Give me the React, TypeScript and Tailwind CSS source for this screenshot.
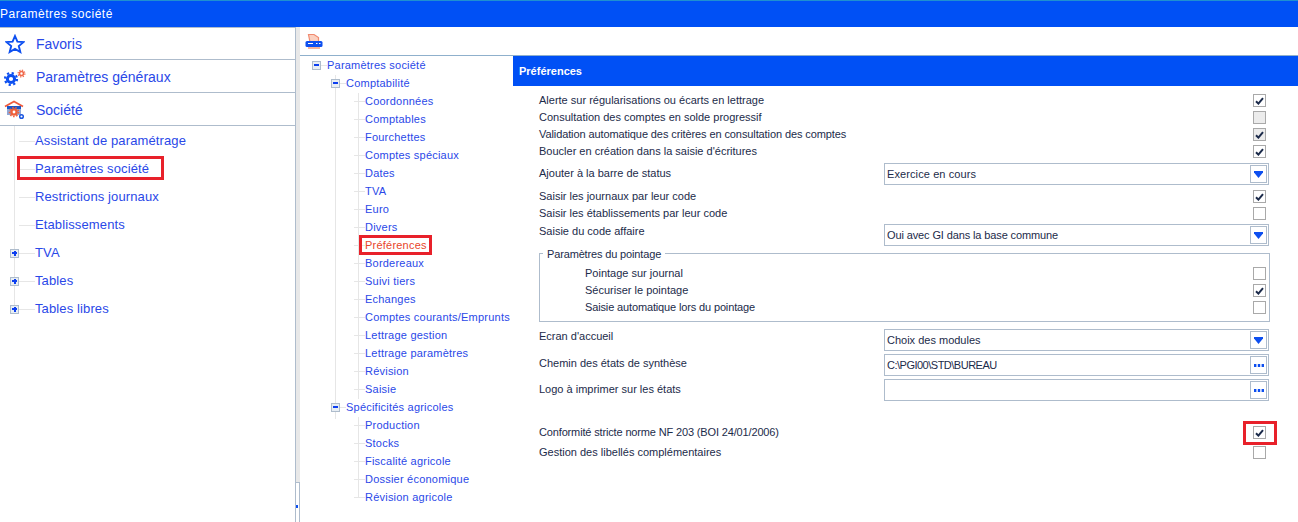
import type { ReactNode } from "react";

const font = "font-['Liberation_Sans',Arial,sans-serif]";

function Check({ on, gray }: { on?: boolean; gray?: boolean }) {
	return (
		<span
			className={`flex h-[13px] w-[13px] items-center justify-center border border-[#a9a9a9] ${gray ? "bg-[#ececec]" : "bg-white"}`}
		>
			{on && (
				<svg width="9" height="8" viewBox="0 0 9 8">
					<path d="M1 4.2 L3.4 6.6 L8 1.2" fill="none" stroke="#1b2a4a" strokeWidth="2" />
				</svg>
			)}
		</span>
	);
}

function Row({
	label,
	on,
	gray,
	indent,
	track = "",
}: {
	label: string;
	on?: boolean;
	gray?: boolean;
	indent?: boolean;
	track?: string;
}) {
	return (
		<div className="flex h-[17px] items-center justify-between pr-[32px]">
			<span className={`${indent ? "pl-[45px]" : ""} ${track}`}>{label}</span>
			<Check on={on} gray={gray} />
		</div>
	);
}

function Field({
	label,
	value,
	kind,
	shift = "-translate-y-px",
	track = "",
}: {
	label: string;
	value?: string;
	kind: "select" | "dots";
	shift?: string;
	track?: string;
}) {
	return (
		<div className="flex h-[22px] items-center pr-[29px]">
			<span className={`w-[345px] ${shift}`}>{label}</span>
			<div className="flex h-[22px] flex-1 items-center justify-between border border-[#aebccc] bg-white pl-[2px] pr-px">
				<span className={`text-[#1c2b4a] ${track}`}>{value}</span>
				<span className="flex h-[18px] w-[17px] items-center justify-center border border-[#aebccc]">
					{kind === "select" ? (
						<svg width="9" height="7" viewBox="0 0 9 7">
							<path d="M0 0 H9 V1.5 L4.5 7 L0 1.5 Z" fill="#0d4ff0" />
						</svg>
					) : (
						<svg width="10" height="3" viewBox="0 0 10 3">
							<rect x="0" y="0" width="2.4" height="3" fill="#0d4ff0" />
							<rect x="3.8" y="0" width="2.4" height="3" fill="#0d4ff0" />
							<rect x="7.6" y="0" width="2.4" height="3" fill="#0d4ff0" />
						</svg>
					)}
				</span>
			</div>
		</div>
	);
}

function Toggle({ plus }: { plus?: boolean }) {
	return (
		<span className="relative z-10 flex h-[9px] w-[9px] shrink-0 items-center justify-center border border-[#aebccc] bg-[#e8eef4]">
			<span className="absolute h-[2px] w-[5px] bg-[#0d3ff0]" />
			{plus && <span className="absolute h-[5px] w-[2px] bg-[#0d3ff0]" />}
		</span>
	);
}

function MainItem({ label, icon, first }: { label: string; icon: ReactNode; first?: boolean }) {
	return (
		<div className={`flex items-center border-b border-[#aebccc] ${first ? "h-[32px] pt-px" : "h-[33px] pt-[2px]"}`}>
			<span className="flex w-[36px] shrink-0 justify-center pr-[6px]">{icon}</span>
			<span className="text-[14px] text-[#2a48e8]">{label}</span>
		</div>
	);
}

function SideLeaf({ label, toggle, boxed }: { label: string; toggle?: boolean; boxed?: boolean }) {
	return (
		<div className="relative flex h-[28px] items-center pl-[10px] text-[13px] tracking-[0.12px] text-[#2a48e8]">
			<span className="flex w-[9px] justify-center">{toggle && <Toggle plus />}</span>
			<span className="h-px w-[16px] bg-[#e6e6e6]" />
			<span>{label}</span>
			{boxed && (
				<span className="absolute left-[17px] top-[1px] h-[24px] w-[147px] border-[3px] border-[#e8212a]" />
			)}
		</div>
	);
}

function TreeLeaf({ label, active }: { label: string; active?: boolean }) {
	return (
		<div className="relative flex h-[18px] items-center pl-[54px]">
			<span className="h-px w-[11px] bg-[#e6e6e6]" />
			<span className={active ? "text-[#e8452a]" : "text-[#2a48e8]"}>{label}</span>
			{active && (
				<span className="absolute left-[59px] top-[-1px] h-[20px] w-[73px] border-[3px] border-[#e8212a]" />
			)}
		</div>
	);
}

function TreeBranch({ label, indent }: { label: string; indent: "root" | "sub" }) {
	return (
		<div className={`flex h-[18px] items-center ${indent === "root" ? "pl-[12px]" : "pl-[31px]"}`}>
			<Toggle />
			<span className="h-px w-[6px] bg-[#e6e6e6]" />
			<span className="text-[#2a48e8]">{label}</span>
		</div>
	);
}

const compta = [
	"Coordonnées",
	"Comptables",
	"Fourchettes",
	"Comptes spéciaux",
	"Dates",
	"TVA",
	"Euro",
	"Divers",
	"Préférences",
	"Bordereaux",
	"Suivi tiers",
	"Echanges",
	"Comptes courants/Emprunts",
	"Lettrage gestion",
	"Lettrage paramètres",
	"Révision",
	"Saisie",
];
const agri = ["Production", "Stocks", "Fiscalité agricole", "Dossier économique", "Révision agricole"];

export default function App() {
	return (
		<div className={`${font} flex h-[522px] w-[1298px] flex-col overflow-hidden bg-white`}>
			<div className="flex h-[27px] shrink-0 items-center border-t border-[#1f8fd0] bg-[#0050f5] text-[12px] tracking-[0.53px] text-white">
				Paramètres société
			</div>
			<div className="flex flex-1">
				{/* colonne de gauche */}
				<div className="relative flex w-[296px] shrink-0 flex-col border-r border-t border-[#aebccc]">
					<MainItem
						first
						label="Favoris"
						icon={
							<svg width="20" height="20" viewBox="0 0 20 20">
								<path
									d="M10 2 L12.4 7.6 L18.5 8.1 L13.8 12.1 L15.3 18 L10 14.9 L4.7 18 L6.2 12.1 L1.5 8.1 L7.6 7.6 Z"
									fill="none"
									stroke="#0d4ff0"
									strokeWidth="1.9"
								/>
							</svg>
						}
					/>
					<MainItem
						label="Paramètres généraux"
						icon={
							<svg width="22" height="18" viewBox="0 0 22 18">
								<circle cx="7" cy="11" r="3.6" fill="#fff" stroke="#0d4ff0" strokeWidth="3" />
								<circle cx="7" cy="11" r="6" fill="none" stroke="#0d4ff0" strokeWidth="2.2" strokeDasharray="2.2 2.5" />
								<circle cx="17.5" cy="5.5" r="2" fill="#fff" stroke="#f0684a" strokeWidth="1.6" />
								<circle cx="17.5" cy="5.5" r="3.4" fill="none" stroke="#f0684a" strokeWidth="1.2" strokeDasharray="1.3 1.37" />
							</svg>
						}
					/>
					<MainItem
						label="Société"
						icon={
							<svg width="22" height="20" viewBox="0 0 22 20">
								<path d="M1 6.5 L10 1.5 L19 6.5" fill="none" stroke="#ee5a3c" strokeWidth="1.8" />
								<rect x="3" y="6" width="14" height="3" fill="#1a55c8" />
								<rect x="3" y="9" width="14" height="6" fill="#8fa8d8" />
								<circle cx="10" cy="12" r="2.6" fill="#fff" stroke="#f0603a" strokeWidth="2.4" />
								<circle cx="10" cy="12" r="4.6" fill="none" stroke="#f0603a" strokeWidth="1.4" strokeDasharray="1.6 1.6" />
								<circle cx="17.5" cy="16.5" r="1.8" fill="#fff" stroke="#1a55e0" strokeWidth="1.5" />
							</svg>
						}
					/>
					<div className="relative pt-px">
						<span className="absolute bottom-[14px] left-[14px] top-0 w-px bg-[#e6e6e6]" />
						<SideLeaf label="Assistant de paramétrage" />
						<SideLeaf label="Paramètres société" boxed />
						<SideLeaf label="Restrictions journaux" />
						<SideLeaf label="Etablissements" />
						<SideLeaf label="TVA" toggle />
						<SideLeaf label="Tables" toggle />
						<SideLeaf label="Tables libres" toggle />
					</div>
				</div>
				{/* poignée */}
				<div className="flex w-[4px] shrink-0 flex-col justify-end bg-[#e8e8e8]">
					<div className="flex h-[40px] w-[4px] items-center border-r border-t border-[#aebccc] bg-white pt-[8px]">
						<span className="h-[3px] w-[2px] bg-[#0d4ff0]" />
					</div>
				</div>
				<div className="flex min-w-0 flex-1 flex-col">
					<div className="flex h-[29px] shrink-0 items-center border-b border-[#8fb0cc] pl-[5px]">
						<svg width="18" height="17" viewBox="0 0 18 17">
							<path d="M3.5 1.5 H9 L13.5 4.5 V9 H5 Z" fill="#fbd0bf" stroke="#f08a70" strokeWidth="1.2" />
							<rect x="0.5" y="8" width="17" height="6" rx="1.5" fill="#0d4ff0" />
							<rect x="3" y="10" width="5" height="1" fill="#fff" />
							<rect x="11" y="10" width="1.5" height="1" fill="#fff" />
							<rect x="14" y="10" width="1.5" height="1" fill="#fff" />
							<rect x="3" y="14" width="12" height="2" fill="#f7b49c" />
						</svg>
					</div>
					<div className="flex flex-1 text-[11px]">
						{/* arbre */}
						<div className="relative w-[213px] shrink-0 tracking-[0.22px]">
							<span className="absolute left-[35px] top-[19px] h-[344px] w-px bg-[#e6e6e6]" />
							<span className="absolute left-[58px] top-[37px] h-[306px] w-px bg-[#e6e6e6]" />
							<span className="absolute left-[58px] top-[361px] h-[80px] w-px bg-[#e6e6e6]" />
							<TreeBranch label="Paramètres société" indent="root" />
							<TreeBranch label="Comptabilité" indent="sub" />
							{compta.map((l) => (
								<TreeLeaf key={l} label={l} active={l === "Préférences"} />
							))}
							<TreeBranch label="Spécificités agricoles" indent="sub" />
							{agri.map((l) => (
								<TreeLeaf key={l} label={l} />
							))}
						</div>
						{/* préférences */}
						<div className="min-w-0 flex-1 text-[#1c2b4a]">
							<div className="flex h-[30px] items-center bg-[#0050f5] pl-[6px] text-[11px] font-bold text-white">
								Préférences
							</div>
							<div className="pl-[26px] pt-[6px]">
								<Row label="Alerte sur régularisations ou écarts en lettrage" on />
								<Row label="Consultation des comptes en solde progressif" gray />
								<Row
									label="Validation automatique des critères en consultation des comptes"
									on
									gray
									track="tracking-[-0.1px]"
								/>
								<Row label="Boucler en création dans la saisie d'écritures" on />
								<div className="mt-[3px]">
									<Field
										label="Ajouter à la barre de status"
										value="Exercice en cours"
										kind="select"
										track="tracking-[0.1px]"
									/>
								</div>
								<div className="mt-[3px]">
									<Row label="Saisir les journaux par leur code" on />
									<Row label="Saisir les établissements par leur code" />
								</div>
								<div className="mt-[2px]">
									<Field
										label="Saisie du code affaire"
										value="Oui avec GI dans la base commune"
										kind="select"
										shift="-translate-y-[4px]"
										track="tracking-[-0.12px]"
									/>
								</div>
								<div className="relative mr-[28px] mt-[7px] h-[69px] border border-[#aebccc] pt-[11px]">
									<span className="absolute left-[3px] top-[-8px] bg-white px-[4px] tracking-[-0.15px]">
										Paramètres du pointage
									</span>
									<div className="[&>div]:pr-[3px]">
										<Row label="Pointage sur journal" indent />
										<Row label="Sécuriser le pointage" on indent />
										<Row label="Saisie automatique lors du pointage" indent track="tracking-[-0.14px]" />
									</div>
								</div>
								<div className="mt-[7px] flex flex-col gap-[3px]">
									<Field label="Ecran d'accueil" value="Choix des modules" kind="select" shift="-translate-y-[4px]" />
									<Field
										label="Chemin des états de synthèse"
										value="C:\PGI00\STD\BUREAU"
										kind="dots"
										shift="-translate-y-[2px]"
										track="tracking-[-0.5px]"
									/>
									<Field label="Logo à imprimer sur les états" value="" kind="dots" />
								</div>
								<div className="relative mt-[23px]">
									<Row label="Conformité stricte norme NF 203 (BOI 24/01/2006)" on track="tracking-[-0.15px]" />
									<span className="absolute right-[21px] top-[-3px] h-[24px] w-[34px] border-[3px] border-[#e8212a]" />
								</div>
								<div className="mt-[3px]">
									<Row label="Gestion des libellés complémentaires" />
								</div>
							</div>
						</div>
					</div>
				</div>
			</div>
		</div>
	);
}
